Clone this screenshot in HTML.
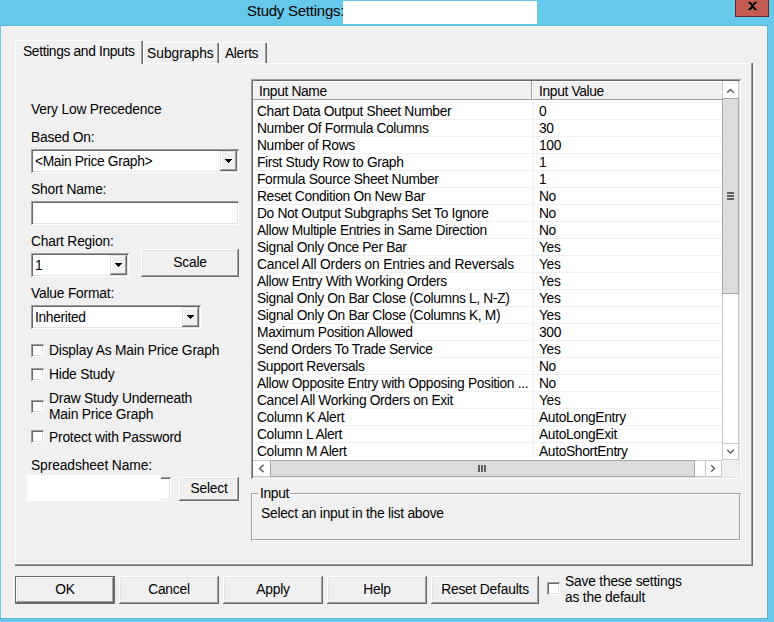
<!DOCTYPE html>
<html><head><meta charset="utf-8">
<style>
*{box-sizing:border-box;margin:0;padding:0}
html,body{width:774px;height:622px;overflow:hidden;background:#67C9E9;font-family:"Liberation Sans",sans-serif;font-size:13px;color:#000}
.a{position:absolute}
.t{position:absolute;white-space:nowrap;line-height:15px}
.L{font-size:13.8px;letter-spacing:-0.2px}
.S{font-size:13.8px;letter-spacing:-0.35px}
</style></head><body>
<div class="a" style="left:0px;top:25px;width:768px;height:1px;background:#5CB4D3"></div>
<div class="a" style="left:767px;top:25px;width:1px;height:594px;background:#5CB4D3"></div>
<div class="a" style="left:0px;top:618px;width:768px;height:1px;background:#5CB4D3"></div>
<div class="a" style="left:1px;top:26px;width:766px;height:592px;background:#F0F0F0;border:1px solid #FAF5F3"></div>
<div class="t" style="left:247px;top:1px;font-size:15px;line-height:20px;letter-spacing:-0.25px">Study Settings:</div>
<div class="a" style="left:343px;top:1px;width:194px;height:23px;background:#fff"></div>
<div class="a" style="left:735px;top:0px;width:34px;height:17px;background:#C45B50;border:1px solid #5A2A26;border-top:none"></div>
<svg class="a" style="left:748px;top:2px" width="9" height="8" shape-rendering="crispEdges"><path d="M0 0h3v1h-3zM6 0h3v1h-3zM1 1h3v1h-3zM5 1h3v1h-3zM2 2h5v1h-5zM3 3h3v1h-3zM3 4h3v1h-3zM2 5h5v1h-5zM1 6h3v1h-3zM5 6h3v1h-3zM0 7h3v1h-3zM6 7h3v1h-3z" fill="#000"/></svg>
<div class="a" style="left:15px;top:63px;width:738px;height:503px;box-shadow:inset -1px -1px #696969,inset -2px -2px #A0A0A0,inset 1px 1px #fff"></div>
<div class="a" style="left:143px;top:42px;width:76px;height:21px;box-shadow:inset 1px 1px #fff,inset -1px 0 #696969,inset -2px 0 #A0A0A0"></div>
<div class="t S" style="left:147px;top:46px;letter-spacing:0px">Subgraphs</div>
<div class="a" style="left:219px;top:42px;width:48px;height:21px;box-shadow:inset 1px 1px #fff,inset -1px 0 #696969,inset -2px 0 #A0A0A0"></div>
<div class="t S" style="left:225px;top:46px;">Alerts</div>
<div class="a" style="left:15px;top:40px;width:128px;height:24px;background:#F0F0F0;box-shadow:inset 1px 1px #fff,inset -1px 0 #696969,inset -2px 0 #A0A0A0"></div>
<div class="a" style="left:15px;top:40px;width:1px;height:1px;background:#F0F0F0"></div>
<div class="a" style="left:16px;top:63px;width:125px;height:2px;background:#F0F0F0"></div>
<div class="t S" style="left:23px;top:44px;">Settings and Inputs</div>
<div class="t L" style="left:31px;top:102px;">Very Low Precedence</div>
<div class="t L" style="left:31px;top:130px;">Based On:</div>
<div class="a" style="left:31px;top:149px;width:208px;height:24px;background:#fff;box-shadow:inset 1px 1px #A0A0A0,inset -1px -1px #fff,inset 2px 2px #696969,inset -2px -2px #E3E3E3"></div>
<div class="a" style="left:220px;top:151px;width:17px;height:20px;background:#F0F0F0;box-shadow:inset -1px -1px #696969,inset 1px 1px #E3E3E3,inset -2px -2px #A0A0A0,inset 2px 2px #fff"></div>
<svg class="a" style="left:225px;top:159px" width="7" height="4" shape-rendering="crispEdges"><path d="M0 0h7v1h-1v1h-1v1h-1v1h-1v-1h-1v-1h-1v-1h-1z" fill="#000"/></svg>
<div class="t S" style="left:35px;top:154px;">&lt;Main Price Graph&gt;</div>
<div class="t L" style="left:31px;top:182px;">Short Name:</div>
<div class="a" style="left:31px;top:201px;width:208px;height:24px;background:#fff;box-shadow:inset 1px 1px #A0A0A0,inset -1px -1px #fff,inset 2px 2px #696969,inset -2px -2px #E3E3E3"></div>
<div class="t L" style="left:31px;top:234px;">Chart Region:</div>
<div class="a" style="left:31px;top:253px;width:98px;height:24px;background:#fff;box-shadow:inset 1px 1px #A0A0A0,inset -1px -1px #fff,inset 2px 2px #696969,inset -2px -2px #E3E3E3"></div>
<div class="a" style="left:110px;top:255px;width:17px;height:20px;background:#F0F0F0;box-shadow:inset -1px -1px #696969,inset 1px 1px #E3E3E3,inset -2px -2px #A0A0A0,inset 2px 2px #fff"></div>
<svg class="a" style="left:115px;top:263px" width="7" height="4" shape-rendering="crispEdges"><path d="M0 0h7v1h-1v1h-1v1h-1v1h-1v-1h-1v-1h-1v-1h-1z" fill="#000"/></svg>
<div class="t S" style="left:35px;top:258px;">1</div>
<div class="a" style="left:141px;top:249px;width:98px;height:28px;background:#F0F0F0;box-shadow:inset -1px -1px #696969,inset 1px 1px #fff,inset -2px -2px #A0A0A0,inset 2px 2px #E3E3E3"></div>
<div class="t L" style="left:141px;top:255px;width:98px;text-align:center">Scale</div>
<div class="t L" style="left:31px;top:286px;">Value Format:</div>
<div class="a" style="left:31px;top:305px;width:170px;height:24px;background:#fff;box-shadow:inset 1px 1px #A0A0A0,inset -1px -1px #fff,inset 2px 2px #696969,inset -2px -2px #E3E3E3"></div>
<div class="a" style="left:182px;top:307px;width:17px;height:20px;background:#F0F0F0;box-shadow:inset -1px -1px #696969,inset 1px 1px #E3E3E3,inset -2px -2px #A0A0A0,inset 2px 2px #fff"></div>
<svg class="a" style="left:187px;top:315px" width="7" height="4" shape-rendering="crispEdges"><path d="M0 0h7v1h-1v1h-1v1h-1v1h-1v-1h-1v-1h-1v-1h-1z" fill="#000"/></svg>
<div class="t S" style="left:35px;top:310px;">Inherited</div>
<div class="a" style="left:31px;top:344px;width:13px;height:13px;background:#fff;box-shadow:inset 1px 1px #A0A0A0,inset -1px -1px #fff,inset 2px 2px #696969,inset -2px -2px #E3E3E3"></div>
<div class="t L" style="left:49px;top:343px;">Display As Main Price Graph</div>
<div class="a" style="left:31px;top:368px;width:13px;height:13px;background:#fff;box-shadow:inset 1px 1px #A0A0A0,inset -1px -1px #fff,inset 2px 2px #696969,inset -2px -2px #E3E3E3"></div>
<div class="t L" style="left:49px;top:367px;">Hide Study</div>
<div class="a" style="left:31px;top:400px;width:13px;height:13px;background:#fff;box-shadow:inset 1px 1px #A0A0A0,inset -1px -1px #fff,inset 2px 2px #696969,inset -2px -2px #E3E3E3"></div>
<div class="t L" style="left:49px;top:391px;">Draw Study Underneath</div>
<div class="t L" style="left:49px;top:407px;">Main Price Graph</div>
<div class="a" style="left:31px;top:430px;width:13px;height:13px;background:#fff;box-shadow:inset 1px 1px #A0A0A0,inset -1px -1px #fff,inset 2px 2px #696969,inset -2px -2px #E3E3E3"></div>
<div class="t L" style="left:49px;top:430px;">Protect with Password</div>
<div class="t L" style="left:31px;top:458px;letter-spacing:-0.1px">Spreadsheet Name:</div>
<div class="a" style="left:140px;top:477px;width:31px;height:24px;background:#fff;box-shadow:inset 1px 1px #A0A0A0,inset -1px -1px #fff,inset 2px 2px #696969,inset -2px -2px #E3E3E3"></div>
<div class="a" style="left:27px;top:475px;width:134px;height:26px;background:#fff"></div>
<div class="a" style="left:179px;top:477px;width:60px;height:24px;background:#F0F0F0;box-shadow:inset -1px -1px #696969,inset 1px 1px #fff,inset -2px -2px #A0A0A0,inset 2px 2px #E3E3E3"></div>
<div class="t L" style="left:179px;top:481px;width:60px;text-align:center">Select</div>
<div class="a" style="left:251px;top:79px;width:490px;height:400px;background:#fff;box-shadow:inset 1px 1px #A0A0A0,inset -1px -1px #fff,inset 2px 2px #696969,inset -2px -2px #E3E3E3"></div>
<div class="a" style="left:253px;top:81px;width:279px;height:19px;background:#F0F0F0;box-shadow:inset -1px -1px #A0A0A0,inset 1px 1px #fff"></div>
<div class="a" style="left:532px;top:81px;width:191px;height:19px;background:#F0F0F0;box-shadow:inset -1px -1px #A0A0A0,inset 1px 1px #fff"></div>
<div class="t S" style="left:259px;top:84px;">Input Name</div>
<div class="t S" style="left:539px;top:84px;">Input Value</div>
<div class="a" style="left:253px;top:102px;width:469px;height:1px;background:#F0F0F0"></div>
<div class="a" style="left:253px;top:119px;width:469px;height:1px;background:#F0F0F0"></div>
<div class="a" style="left:253px;top:136px;width:469px;height:1px;background:#F0F0F0"></div>
<div class="a" style="left:253px;top:153px;width:469px;height:1px;background:#F0F0F0"></div>
<div class="a" style="left:253px;top:170px;width:469px;height:1px;background:#F0F0F0"></div>
<div class="a" style="left:253px;top:187px;width:469px;height:1px;background:#F0F0F0"></div>
<div class="a" style="left:253px;top:204px;width:469px;height:1px;background:#F0F0F0"></div>
<div class="a" style="left:253px;top:221px;width:469px;height:1px;background:#F0F0F0"></div>
<div class="a" style="left:253px;top:238px;width:469px;height:1px;background:#F0F0F0"></div>
<div class="a" style="left:253px;top:255px;width:469px;height:1px;background:#F0F0F0"></div>
<div class="a" style="left:253px;top:272px;width:469px;height:1px;background:#F0F0F0"></div>
<div class="a" style="left:253px;top:289px;width:469px;height:1px;background:#F0F0F0"></div>
<div class="a" style="left:253px;top:306px;width:469px;height:1px;background:#F0F0F0"></div>
<div class="a" style="left:253px;top:323px;width:469px;height:1px;background:#F0F0F0"></div>
<div class="a" style="left:253px;top:340px;width:469px;height:1px;background:#F0F0F0"></div>
<div class="a" style="left:253px;top:357px;width:469px;height:1px;background:#F0F0F0"></div>
<div class="a" style="left:253px;top:374px;width:469px;height:1px;background:#F0F0F0"></div>
<div class="a" style="left:253px;top:391px;width:469px;height:1px;background:#F0F0F0"></div>
<div class="a" style="left:253px;top:408px;width:469px;height:1px;background:#F0F0F0"></div>
<div class="a" style="left:253px;top:425px;width:469px;height:1px;background:#F0F0F0"></div>
<div class="a" style="left:253px;top:442px;width:469px;height:1px;background:#F0F0F0"></div>
<div class="a" style="left:533px;top:100px;width:1px;height:359px;background:#F0F0F0"></div>
<div class="t S" style="left:257px;top:104px;width:274px;overflow:hidden;">Chart Data Output Sheet Number</div>
<div class="t S" style="left:539px;top:104px;">0</div>
<div class="t S" style="left:257px;top:121px;width:274px;overflow:hidden;">Number Of Formula Columns</div>
<div class="t S" style="left:539px;top:121px;">30</div>
<div class="t S" style="left:257px;top:138px;width:274px;overflow:hidden;">Number of Rows</div>
<div class="t S" style="left:539px;top:138px;">100</div>
<div class="t S" style="left:257px;top:155px;width:274px;overflow:hidden;">First Study Row to Graph</div>
<div class="t S" style="left:539px;top:155px;">1</div>
<div class="t S" style="left:257px;top:172px;width:274px;overflow:hidden;">Formula Source Sheet Number</div>
<div class="t S" style="left:539px;top:172px;">1</div>
<div class="t S" style="left:257px;top:189px;width:274px;overflow:hidden;">Reset Condition On New Bar</div>
<div class="t S" style="left:539px;top:189px;">No</div>
<div class="t S" style="left:257px;top:206px;width:274px;overflow:hidden;">Do Not Output Subgraphs Set To Ignore</div>
<div class="t S" style="left:539px;top:206px;">No</div>
<div class="t S" style="left:257px;top:223px;width:274px;overflow:hidden;">Allow Multiple Entries in Same Direction</div>
<div class="t S" style="left:539px;top:223px;">No</div>
<div class="t S" style="left:257px;top:240px;width:274px;overflow:hidden;">Signal Only Once Per Bar</div>
<div class="t S" style="left:539px;top:240px;">Yes</div>
<div class="t S" style="left:257px;top:257px;width:274px;overflow:hidden;letter-spacing:-0.2px;">Cancel All Orders on Entries and Reversals</div>
<div class="t S" style="left:539px;top:257px;">Yes</div>
<div class="t S" style="left:257px;top:274px;width:274px;overflow:hidden;">Allow Entry With Working Orders</div>
<div class="t S" style="left:539px;top:274px;">Yes</div>
<div class="t S" style="left:257px;top:291px;width:274px;overflow:hidden;">Signal Only On Bar Close (Columns L, N-Z)</div>
<div class="t S" style="left:539px;top:291px;">Yes</div>
<div class="t S" style="left:257px;top:308px;width:274px;overflow:hidden;">Signal Only On Bar Close (Columns K, M)</div>
<div class="t S" style="left:539px;top:308px;">Yes</div>
<div class="t S" style="left:257px;top:325px;width:274px;overflow:hidden;">Maximum Position Allowed</div>
<div class="t S" style="left:539px;top:325px;">300</div>
<div class="t S" style="left:257px;top:342px;width:274px;overflow:hidden;">Send Orders To Trade Service</div>
<div class="t S" style="left:539px;top:342px;">Yes</div>
<div class="t S" style="left:257px;top:359px;width:274px;overflow:hidden;">Support Reversals</div>
<div class="t S" style="left:539px;top:359px;">No</div>
<div class="t S" style="left:257px;top:376px;width:274px;overflow:hidden;">Allow Opposite Entry with Opposing Position ...</div>
<div class="t S" style="left:539px;top:376px;">No</div>
<div class="t S" style="left:257px;top:393px;width:274px;overflow:hidden;">Cancel All Working Orders on Exit</div>
<div class="t S" style="left:539px;top:393px;">Yes</div>
<div class="t S" style="left:257px;top:410px;width:274px;overflow:hidden;">Column K Alert</div>
<div class="t S" style="left:539px;top:410px;">AutoLongEntry</div>
<div class="t S" style="left:257px;top:427px;width:274px;overflow:hidden;">Column L Alert</div>
<div class="t S" style="left:539px;top:427px;">AutoLongExit</div>
<div class="t S" style="left:257px;top:444px;width:274px;overflow:hidden;">Column M Alert</div>
<div class="t S" style="left:539px;top:444px;">AutoShortEntry</div>
<div class="a" style="left:722px;top:81px;width:17px;height:379px;background:#fff;border-left:1px solid #C8C8C8;border-right:1px solid #C8C8C8"></div>
<div class="a" style="left:722px;top:81px;width:17px;height:18px;background:#fff;border:1px solid #C8C8C8;border-top:none"></div>
<div class="a" style="left:722px;top:98px;width:17px;height:196px;background:#DCDCDC;border:1px solid #A8A8A8"></div>
<div class="a" style="left:722px;top:443px;width:17px;height:17px;background:#fff;border:1px solid #C8C8C8"></div>
<svg class="a" style="left:726px;top:87px" width="9" height="7"><path d="M1.2 5.8L4.5 2.5L7.8 5.8" stroke="#606060" stroke-width="1.45" fill="none"/></svg>
<svg class="a" style="left:726px;top:448px" width="9" height="7"><path d="M1.2 1.7L4.5 5L7.8 1.7" stroke="#606060" stroke-width="1.45" fill="none"/></svg>
<svg class="a" style="left:727px;top:192px" width="7" height="8" shape-rendering="crispEdges"><path d="M0 0h7v2h-7zM0 3h7v2h-7zM0 6h7v2h-7z" fill="#606060"/></svg>
<div class="a" style="left:253px;top:460px;width:469px;height:17px;background:#fff;border-top:1px solid #C8C8C8;border-bottom:1px solid #C8C8C8"></div>
<div class="a" style="left:253px;top:460px;width:18px;height:17px;background:#fff;border:1px solid #C8C8C8;border-left:none"></div>
<div class="a" style="left:270px;top:460px;width:425px;height:17px;background:#DCDCDC;border:1px solid #A8A8A8"></div>
<div class="a" style="left:705px;top:460px;width:17px;height:17px;background:#fff;border:1px solid #C8C8C8"></div>
<div class="a" style="left:722px;top:460px;width:17px;height:17px;background:#F0F0F0"></div>
<svg class="a" style="left:257px;top:464px" width="7" height="9"><path d="M6.6 0.9L2.6 4.5L6.6 8.1" stroke="#606060" stroke-width="1.45" fill="none"/></svg>
<svg class="a" style="left:710px;top:464px" width="7" height="9"><path d="M1.2 1.2L4.5 4.5L1.2 7.8" stroke="#606060" stroke-width="1.45" fill="none"/></svg>
<svg class="a" style="left:478px;top:465px" width="8" height="7" shape-rendering="crispEdges"><path d="M0 0h2v7h-2zM3 0h2v7h-2zM6 0h2v7h-2z" fill="#606060"/></svg>
<div class="a" style="left:251px;top:493px;width:490px;height:48px;box-shadow:inset 1px 1px #A0A0A0,inset -1px -1px #fff,inset -2px -2px #A0A0A0,inset 2px 2px #fff"></div>
<div class="a" style="left:258px;top:486px;width:32px;height:10px;background:#F0F0F0"></div>
<div class="t S" style="left:260px;top:486px;">Input</div>
<div class="t S" style="left:261px;top:506px;letter-spacing:-0.25px">Select an input in the list above</div>
<div class="a" style="left:15px;top:576px;width:100px;height:28px;background:#696969"></div>
<div class="a" style="left:16px;top:577px;width:98px;height:26px;background:#F0F0F0;box-shadow:inset -1px -1px #696969,inset 1px 1px #fff,inset -2px -2px #A0A0A0,inset 2px 2px #E3E3E3"></div>
<div class="t L" style="left:16px;top:582px;width:98px;text-align:center">OK</div>
<div class="a" style="left:119px;top:576px;width:100px;height:28px;background:#F0F0F0;box-shadow:inset -1px -1px #696969,inset 1px 1px #fff,inset -2px -2px #A0A0A0,inset 2px 2px #E3E3E3"></div>
<div class="t L" style="left:119px;top:582px;width:100px;text-align:center">Cancel</div>
<div class="a" style="left:223px;top:576px;width:100px;height:28px;background:#F0F0F0;box-shadow:inset -1px -1px #696969,inset 1px 1px #fff,inset -2px -2px #A0A0A0,inset 2px 2px #E3E3E3"></div>
<div class="t L" style="left:223px;top:582px;width:100px;text-align:center">Apply</div>
<div class="a" style="left:327px;top:576px;width:100px;height:28px;background:#F0F0F0;box-shadow:inset -1px -1px #696969,inset 1px 1px #fff,inset -2px -2px #A0A0A0,inset 2px 2px #E3E3E3"></div>
<div class="t L" style="left:327px;top:582px;width:100px;text-align:center">Help</div>
<div class="a" style="left:431px;top:576px;width:108px;height:28px;background:#F0F0F0;box-shadow:inset -1px -1px #696969,inset 1px 1px #fff,inset -2px -2px #A0A0A0,inset 2px 2px #E3E3E3"></div>
<div class="t L" style="left:431px;top:582px;width:108px;text-align:center">Reset Defaults</div>
<div class="a" style="left:547px;top:582px;width:13px;height:13px;background:#fff;box-shadow:inset 1px 1px #A0A0A0,inset -1px -1px #fff,inset 2px 2px #696969,inset -2px -2px #E3E3E3"></div>
<div class="t L" style="left:565px;top:574px;">Save these settings</div>
<div class="t L" style="left:565px;top:590px;">as the default</div>
</body></html>
